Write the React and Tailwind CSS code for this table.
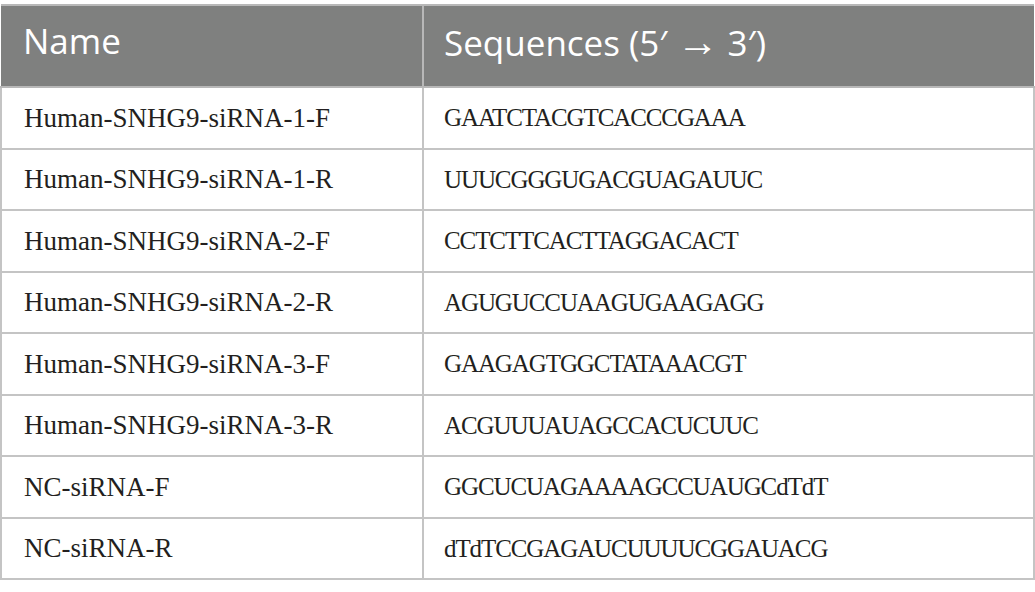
import React from 'react';

const rows = [
  ['Human-SNHG9-siRNA-1-F', 'GAATCTACGTCACCCGAAA'],
  ['Human-SNHG9-siRNA-1-R', 'UUUCGGGUGACGUAGAUUC'],
  ['Human-SNHG9-siRNA-2-F', 'CCTCTTCACTTAGGACACT'],
  ['Human-SNHG9-siRNA-2-R', 'AGUGUCCUAAGUGAAGAGG'],
  ['Human-SNHG9-siRNA-3-F', 'GAAGAGTGGCTATAAACGT'],
  ['Human-SNHG9-siRNA-3-R', 'ACGUUUAUAGCCACUCUUC'],
  ['NC-siRNA-F', 'GGCUCUAGAAAAGCCUAUGCdTdT'],
  ['NC-siRNA-R', 'dTdTCCGAGAUCUUUUCGGAUACG'],
];

export default function App() {
  return (
    <div className="w-[1035px] h-[592px] bg-white pt-1">
      <table className="w-full border-collapse text-left">
        <thead>
          <tr className="h-[82px] bg-[#7f807f] text-white text-[35px] leading-none font-['Open_Sans',sans-serif]">
            <th className="w-[422px] border-2 border-[#b8b8b8] border-l-0 pl-[22px] pb-[12px] font-normal align-middle">Name</th>
            <th className="border-2 border-[#b8b8b8] border-r-0 pl-[20px] pb-[12px] font-normal align-middle">
              Sequences (5′ <span className="text-[42px]">→</span> 3′)
            </th>
          </tr>
        </thead>
        <tbody className="text-[#231f20] font-['Liberation_Serif',serif]">
          {rows.map(([name, seq]) => (
            <tr key={name} className="h-[61.5px]">
              <td className="border-2 border-[#c4c4c4] pl-[22px] text-[27px]">{name}</td>
              <td className="border-2 border-[#c4c4c4] pl-[20px] text-[25px] tracking-[-1.1px]">{seq}</td>
            </tr>
          ))}
        </tbody>
      </table>
    </div>
  );
}
